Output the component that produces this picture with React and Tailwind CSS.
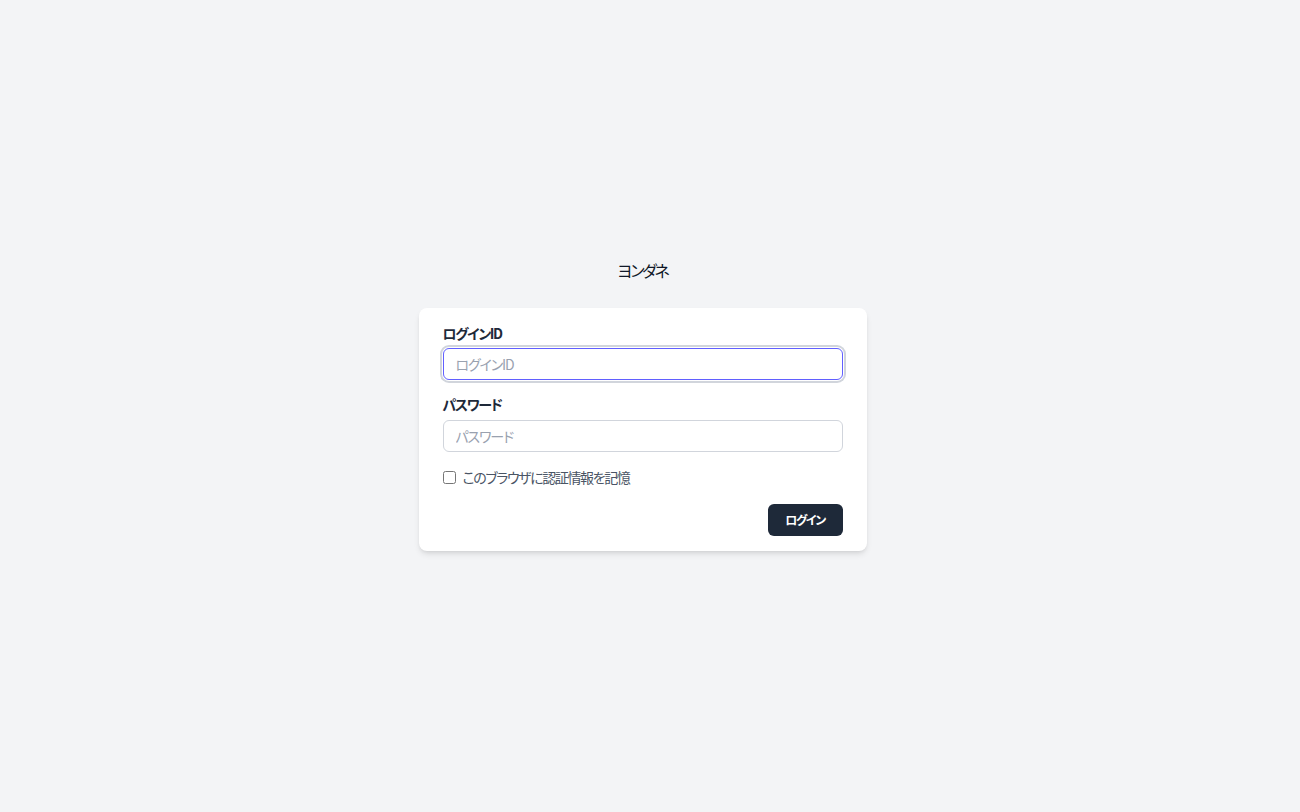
import React, { useState } from "react";

const App = () => {
  const [loginId, setLoginId] = useState("");
  const [password, setPassword] = useState("");
  const [remember, setRemember] = useState(false);

  return (
    <div
      className="bg-gray-100 pb-[46px] [font-feature-settings:'palt']"
      style={{ fontFamily: '"Noto Sans CJK JP", "Noto Sans", sans-serif' }}
    >
      <div className="min-h-screen flex flex-col items-center justify-center pl-4 pr-[31px] -mt-[2px]">
        {/* Title */}
        <h1 className="text-base leading-6 text-gray-900 tracking-[-0.14em] mb-[26px]">ヨンダネ</h1>

        {/* Card */}
        <div className="w-full max-w-md bg-white rounded-lg shadow-md px-6 py-[15px]">
          <div className="mb-[14px]">
            <label className="block text-sm leading-5 font-semibold text-gray-800 tracking-[-0.1em] mb-[5px]">
              ログインID
            </label>
            <input
              type="text"
              value={loginId}
              onChange={(e) => setLoginId(e.target.value)}
              placeholder="ログインID"
              className="block w-full h-8 px-3 text-sm text-gray-900 tracking-[-0.08em] placeholder-gray-400 bg-white border border-indigo-500 rounded-md ring-2 ring-gray-300 ring-offset-1 outline-none"
            />
          </div>

          <div className="mb-[15px]">
            <label className="block text-sm leading-5 font-semibold text-gray-800 tracking-[-0.1em] mb-[6px]">
              パスワード
            </label>
            <input
              type="password"
              value={password}
              onChange={(e) => setPassword(e.target.value)}
              placeholder="パスワード"
              className="block w-full h-8 px-3 text-sm text-gray-900 tracking-[-0.08em] placeholder-gray-400 bg-white border border-gray-300 rounded-md outline-none"
            />
          </div>

          <label className="flex items-center gap-[7px] text-sm leading-5 text-gray-600 tracking-[-0.1em]">
            <input
              type="checkbox"
              checked={remember}
              onChange={(e) => setRemember(e.target.checked)}
              className="w-[13px] h-[13px] mt-[2px]"
            />
            このブラウザに認証情報を記憶
          </label>

          <div className="flex justify-end mt-[17px]">
            <button className="h-8 w-[75px] rounded-md bg-gray-800 text-white text-xs font-bold tracking-[-0.12em] hover:bg-gray-700 transition">
              ログイン
            </button>
          </div>
        </div>
      </div>
    </div>
  );
};

export default App;
